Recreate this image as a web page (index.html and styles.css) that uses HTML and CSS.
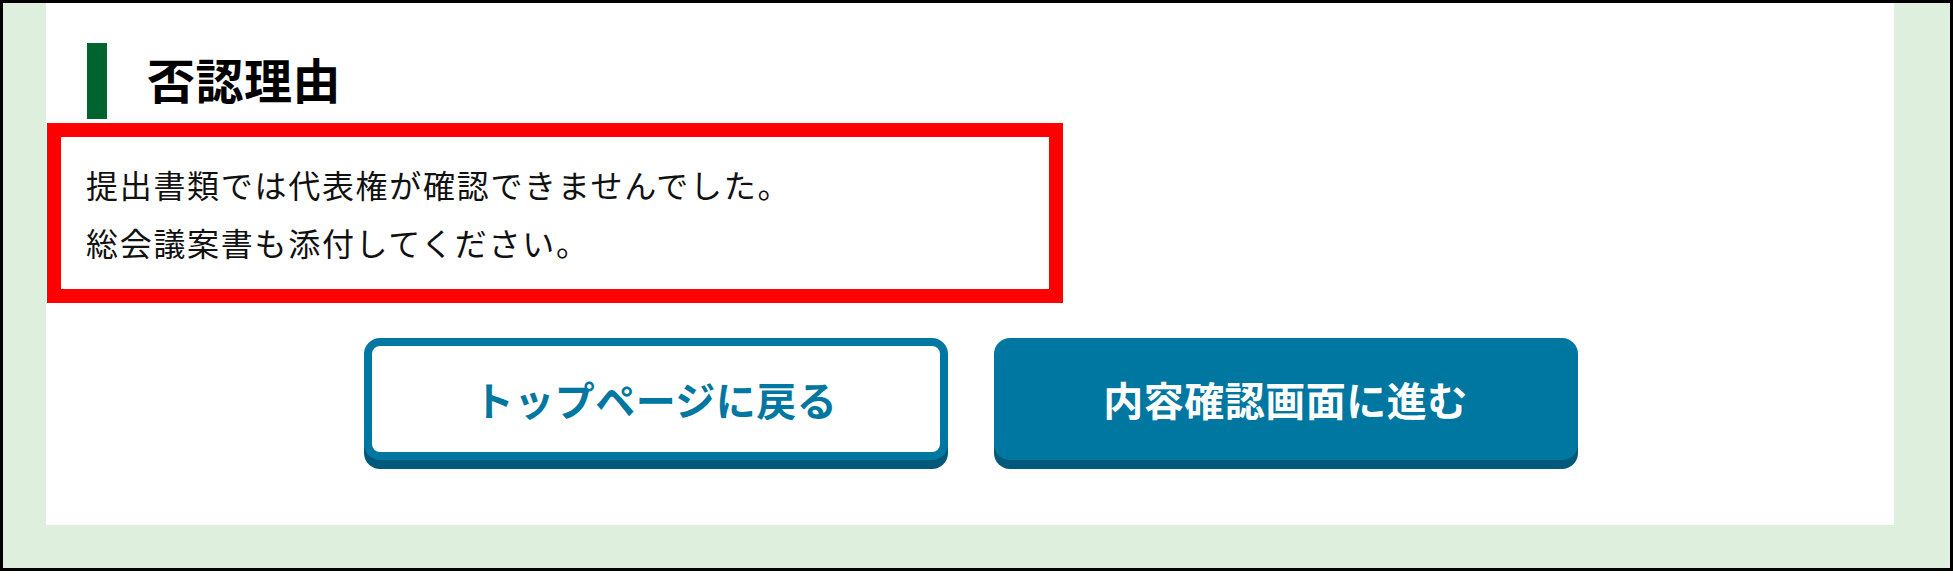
FILE: index.html
```html
<!DOCTYPE html>
<html lang="ja">
<head>
<meta charset="utf-8">
<title>否認理由</title>
<link rel="stylesheet" href="styles.css">
</head>
<body>
<div class="frame">
  <div class="panel">
    <div class="heading">
      <span class="heading-bar"></span>
      <h2 class="heading-title">否認理由</h2>
    </div>
    <div class="reason">
      <p class="reason-line">提出書類では代表権が確認できませんでした。</p>
      <p class="reason-line">総会議案書も添付してください。</p>
    </div>
    <div class="actions">
      <a class="btn btn-outline" href="#">トップページに戻る</a>
      <a class="btn btn-solid" href="#">内容確認画面に進む</a>
    </div>
  </div>
</div>
</body>
</html>
```

FILE: styles.css
```css
html, body {
  margin: 0;
  padding: 0;
  background: #ffffff;
}

body {
  font-family: "Noto Sans CJK JP", "Noto Sans", sans-serif;
  color: #111111;
}

.frame {
  box-sizing: border-box;
  width: 1953px;
  height: 571px;
  border: 3px solid #000000;
  background: #dfefdd;
  padding: 0 56px 43px 43px;
}

.panel {
  box-sizing: border-box;
  height: 522px;
  background: #ffffff;
  padding: 40px 0 0 1px;
}

.heading {
  display: flex;
  align-items: center;
  height: 76px;
  margin-left: 40px;
}

.heading-bar {
  display: block;
  width: 20px;
  height: 76px;
  background: #00642f;
}

.heading-title {
  margin: 0 0 0 40px;
  font-size: 48px;
  font-weight: 700;
  line-height: 1;
  letter-spacing: 0.5px;
  color: #000000;
  position: relative;
  top: -3px;
}

.reason {
  box-sizing: border-box;
  width: 1016px;
  height: 180px;
  margin-top: 4px;
  border: 14px solid #ff0000;
  padding: 18px 25px 0;
}

.reason-line {
  margin: 0;
  font-size: 32px;
  line-height: 58px;
  letter-spacing: 1.7px;
  color: #111111;
}

.actions {
  display: flex;
  justify-content: center;
  gap: 46px;
  margin-top: 35px;
}

.btn {
  box-sizing: border-box;
  display: flex;
  align-items: center;
  justify-content: center;
  width: 584px;
  height: 122px;
  border-radius: 16px;
  box-shadow: 0 9px 0 #00597a;
  font-size: 40px;
  font-weight: 700;
  letter-spacing: 0.5px;
  text-decoration: none;
  line-height: 1;
}

.btn-outline {
  background: #ffffff;
  border: 8px solid #0077a0;
  color: #0077a0;
}

.btn-solid {
  background: #0077a0;
  color: #ffffff;
}
```
